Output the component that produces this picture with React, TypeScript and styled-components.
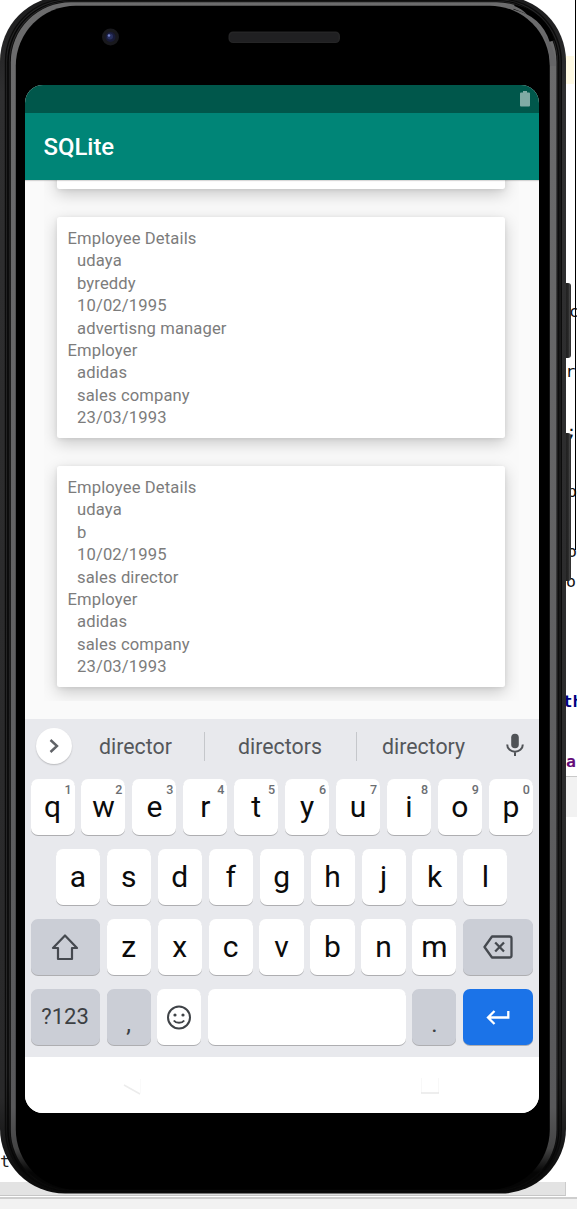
import React from 'react';
import styled, { createGlobalStyle } from 'styled-components';

const GlobalStyle = createGlobalStyle`
  * { box-sizing: border-box; }
  html, body { margin: 0; padding: 0; background: #fff; overflow: hidden; }
`;

const Stage = styled.div`
  position: relative;
  width: 577px;
  height: 1209px;
  overflow: hidden;
  background: #fff;
  font-family: Roboto, 'Liberation Sans', sans-serif;
`;

/* Editor window visible around the device */
const Editor = styled.div`
  position: absolute;
  inset: 0;
  display: flex;
  flex-direction: column;
`;
const Code = styled.div`
  height: 776px;
  padding-top: 56px;
  overflow: hidden;
`;
const ActiveLine = styled.div`
  height: 28px;
  margin: 0 3px 213px 0;
  background: #fffae3;
`;
const CodeLine = styled.div<{ $x: number; $color?: string; $bold?: boolean }>`
  height: 30px;
  line-height: 30px;
  padding-left: ${p => p.$x}px;
  white-space: pre;
  font-family: 'DejaVu Sans Mono', monospace;
  font-size: 16.5px;
  font-weight: ${p => (p.$bold ? 700 : 400)};
  color: ${p => p.$color || '#111'};
`;
const PaneHeader = styled.div`
  height: 41px;
  border-top: 1.5px solid #c9c9c9;
  background: #f2f2f2;
`;
const Output = styled.div`
  height: 365px;
  padding-top: 330px;
  font-family: 'DejaVu Sans Mono', monospace;
  font-size: 16.5px;
  line-height: 30px;
  color: #222;
`;
const ScrollTrack = styled.div`
  width: 566px;
  height: 14px;
  background: #e3e3e3;
  border-right: 1px solid #ccc;
  border-bottom: 1px solid #c6c6c6;
`;
const StatusStrip = styled.div`
  flex: 1;
  margin-top: 1px;
  border-top: 2px solid #cecece;
  background: #f2f2f2;
`;
const MarginGuide = styled.div`
  position: absolute;
  left: 575px;
  top: 0;
  width: 1px;
  height: 550px;
  background: #000;
`;

/* Device */
const Phone = styled.div`
  position: relative;
  width: 566px;
  height: 1198px;
  margin-top: -4px;
  padding: 89px 27px 0 25px;
`;
const SideButton = styled.div<{ $top: number; $h: number }>`
  position: absolute;
  left: 564px;
  top: ${p => p.$top}px;
  width: 7px;
  height: ${p => p.$h}px;
  border-radius: 0 3px 3px 0;
  background: linear-gradient(90deg, #1d1d1d, #262626 60%, #4b4b4b 85%, #1c1c1c);
`;
const BezelArt = styled.svg`
  position: absolute;
  left: 0;
  top: 0;
`;
const Screen = styled.div`
  position: relative;
  display: flex;
  flex-direction: column;
  width: 514px;
  height: 1028px;
  border-radius: 18px;
  overflow: hidden;
  background: #fafafa;
`;
const StatusBar = styled.div`
  display: flex;
  justify-content: flex-end;
  height: 28px;
  padding: 6px 9.5px 0 0;
  background: #00574b;
`;
const AppBar = styled.div`
  display: flex;
  align-items: center;
  height: 67px;
  padding: 1px 0 0 18.5px;
  background: #008577;
  box-shadow: 0 1px 1px rgba(0, 0, 0, 0.15);
  z-index: 1;
  color: #fff;
  font-size: 23.9px;
  font-weight: 500;
`;
const Content = styled.div`
  height: 539px;
  padding: 0 20px 18px 19px;
`;
const List = styled.div`
  display: flex;
  flex-direction: column;
  justify-content: flex-end;
  gap: 28px;
  height: 521px;
  padding: 0 14px 14px 13px;
  overflow: hidden;
  background: #f9f9f9;
`;
const Card = styled.div<{ $h?: number }>`
  flex: none;
  height: ${p => p.$h || 221}px;
  padding: 11px 10.5px;
  border-radius: 2.5px;
  background: #fff;
  box-shadow: 0 5px 16px rgba(0, 0, 0, 0.2), 0 1px 4px rgba(0, 0, 0, 0.07);
  color: #7c7c7c;
  font-size: 16.6px;
  letter-spacing: 0.13px;
`;
const Detail = styled.div<{ $indent?: boolean }>`
  height: 22.4px;
  line-height: 22.4px;
  padding-left: ${p => (p.$indent ? 9.5 : 0)}px;
  white-space: pre;
`;

/* Keyboard */
const Keyboard = styled.div`
  height: 338px;
  background: #e8e9ed;
`;
const Suggestions = styled.div`
  display: flex;
  align-items: center;
  height: 60px;
  padding: 0 10px 6px 11px;
`;
const Expand = styled.div`
  flex: none;
  display: flex;
  align-items: center;
  justify-content: center;
  width: 36px;
  height: 36px;
  border-radius: 50%;
  background: #fff;
  box-shadow: 0 1px 1.5px rgba(0, 0, 0, 0.2);
`;
const Word = styled.div<{ $w: number; $line?: boolean; $end?: number }>`
  flex: none;
  width: ${p => p.$w}px;
  height: 29px;
  line-height: 29px;
  padding-right: ${p => p.$end || 0}px;
  border-right: ${p => (p.$line ? '1px solid #c5c7cb' : 'none')};
  text-align: center;
  font-size: 21.3px;
  color: #54575b;
`;
const MicSlot = styled.div`
  flex: none;
  display: flex;
  justify-content: center;
  width: 30px;
  margin-left: 8.5px;
  margin-top: -2px;
`;
const Keys = styled.div`
  display: flex;
  flex-direction: column;
  gap: 14px;
`;
const KeyRow = styled.div<{ $pad?: number }>`
  display: flex;
  gap: 6.9px;
  height: 56px;
  padding: 0 ${p => (p.$pad || 0) + 6.2}px 0 ${p => (p.$pad || 0) + 5.5}px;
`;
const Key = styled.div<{ $tone?: 'grey' | 'blue'; $w?: number; $size?: number; $low?: boolean }>`
  position: relative;
  display: flex;
  align-items: center;
  justify-content: center;
  flex: ${p => (p.$w ? `0 0 ${p.$w}px` : '1 1 0')};
  min-width: 0;
  padding-top: ${p => (p.$low ? 13 : 0)}px;
  padding-bottom: ${p => (p.$low ? 0 : 2)}px;
  border-radius: 7px;
  background: ${p => (p.$tone === 'blue' ? '#1b73e8' : p.$tone === 'grey' ? '#cbced6' : '#fff')};
  box-shadow: 0 1px 0.5px rgba(0, 0, 0, 0.25);
  color: ${p => (p.$tone === 'grey' ? '#3c4043' : '#0b0b0b')};
  font-size: ${p => p.$size || 30}px;

  svg { position: relative; top: 1px; }
`;
const Hint = styled.span`
  position: absolute;
  top: 4px;
  right: 3px;
  font-size: 12.5px;
  font-weight: 500;
  line-height: 14px;
  color: #6b6e72;
`;
const NavBar = styled.div`
  display: flex;
  justify-content: space-between;
  align-items: center;
  flex: 1;
  padding: 0 99px 0 97px;
  background: #fff;
`;

const cards = [
  ['udaya', 'byreddy', '10/02/1995', 'advertisng manager'],
  ['udaya', 'b', '10/02/1995', 'sales director'],
];

const codeLines: { t: string; x: number; c?: string; b?: boolean }[] = [
  { t: 'c', x: 569 }, { t: '', x: 0 }, { t: 'r', x: 565.5 }, { t: '', x: 0 }, { t: ';', x: 566.5 }, { t: '', x: 0 },
  { t: 'p', x: 567 }, { t: '', x: 0 }, { t: 'o', x: 567 }, { t: 'o', x: 566 }, { t: '', x: 0 }, { t: '', x: 0 }, { t: '', x: 0 },
  { t: 'th', x: 562.5, c: '#000080', b: true }, { t: '', x: 0 }, { t: 'a', x: 566, c: '#660e7a', b: true },
];

/* Nested metal rims of the device, outermost first: left, right, top, bottom, radius, fill */
const rims: [number, number, number, number, number, string][] = [
  [0, 566, -4, 1193.5, 65, 'url(#shell)'],
  [4.8, 562, -1.5, 1192.5, 63, '#0b0b0b'],
  [6.2, 560.5, -0.5, 1192, 62, 'url(#line)'],
  [7.2, 559.5, 0.2, 1191.5, 62, '#060606'],
  [8.8, 558.2, 1, 1191, 61, 'url(#line)'],
  [9.8, 557.4, 1.6, 1190.5, 61, '#0c0c0c'],
  [10.8, 556.5, 2.2, 1190, 60, 'url(#shine)'],
  [15.8, 549.8, 5.8, 1189.5, 60, '#000'],
];

const Bezel = () => (
  <BezelArt width="566" height="1198" viewBox="0 -4 566 1198" fill="none">
    <defs>
      <linearGradient id="shell" x1="0" y1="0" x2="0" y2="1">
        <stop offset="0" stopColor="#1b1b1c" />
        <stop offset="0.08" stopColor="#2f2f30" />
        <stop offset="0.92" stopColor="#29292a" />
        <stop offset="0.99" stopColor="#0a0a0a" />
      </linearGradient>
      <linearGradient id="line" x1="0" y1="0" x2="0" y2="1">
        <stop offset="0" stopColor="#242425" />
        <stop offset="0.9" stopColor="#2e2e2f" />
        <stop offset="0.98" stopColor="#080808" />
      </linearGradient>
      <linearGradient id="shine" x1="0" y1="0" x2="0" y2="1">
        <stop offset="0" stopColor="#6c6c6d" />
        <stop offset="0.93" stopColor="#58585a" />
        <stop offset="0.965" stopColor="#444" />
        <stop offset="0.985" stopColor="#050505" />
      </linearGradient>
    </defs>
    {rims.map(([l, r, t, b, radius, fill]) => (
      <rect key={l} x={l} y={t} width={r - l} height={b - t} rx={radius} fill={fill} />
    ))}
    {/* unlit part of the upper right corner */}
    <path d="M514 7C535 12 547 25 552 41" stroke="#000" strokeWidth="5" />
    <path d="M508 4.200C516 6 522 9 527 14.500C520 11 514 8.500 505 7Z" fill="#6a6a6b" />
    <path d="M543 33C550 41 555.500 52 556 66H550C549.500 53 548 44 543 33Z" fill="#656567" />

    <circle cx="110.500" cy="37" r="8.500" fill="#19191d" />
    <circle cx="110.500" cy="37" r="5" fill="#191b38" />
    <circle cx="110" cy="36.500" r="3" fill="#28305f" />
    <circle cx="109" cy="35.500" r="1.200" fill="#7884c9" />
    <rect x="228.500" y="31.500" width="111.500" height="11.500" rx="4.500" fill="#252526" />
    <rect x="230" y="33" width="108.500" height="9" rx="3.500" fill="#202022" />
  </BezelArt>
);

const Battery = () => (
  <svg width="10" height="16" viewBox="0 0 10 16">
    <path d="M3 0H7V1.500H9A1 1 0 0 1 10 2.500V14.500A1 1 0 0 1 9 15.500H1A1 1 0 0 1 0 14.500V2.500A1 1 0 0 1 1 1.500H3Z" fill="#80aba5" />
  </svg>
);
const Mic = () => (
  <svg width="18" height="24" viewBox="0 0 18 24" fill="none">
    <rect x="5.200" y="0.800" width="7.600" height="14.400" rx="3.800" fill="#505357" />
    <path d="M1.200 11.500C1.200 21 16.800 21 16.800 11.500M9 18.500V23" stroke="#505357" strokeWidth="2" />
  </svg>
);
const Shift = () => (
  <svg width="28" height="28" viewBox="0 0 28 28" fill="none" stroke="#45494f" strokeWidth="2.200" strokeLinejoin="round">
    <path d="M14 2.500L26 15H21V26H7V15H2Z" />
  </svg>
);
const Backspace = () => (
  <svg width="30" height="24" viewBox="0 0 30 24" fill="none" stroke="#45494f" strokeWidth="2.300" strokeLinejoin="round">
    <path d="M9 1.500H26.500Q28.500 1.500 28.500 3.500V20.500Q28.500 22.500 26.500 22.500H9L1.500 12Z" />
    <path d="M12.200 7.500L21 16.500M21 7.500L12.200 16.500" />
  </svg>
);
const Smile = () => (
  <svg width="26" height="26" viewBox="0 0 26 26" fill="none" stroke="#3f4347" strokeWidth="2">
    <circle cx="13" cy="13.500" r="11" />
    <path d="M7.800 16.500C10 19.500 16 19.500 18.200 16.500" />
    <circle cx="9" cy="11" r="1.600" fill="#3f4347" stroke="none" />
    <circle cx="17" cy="11" r="1.600" fill="#3f4347" stroke="none" />
  </svg>
);
const Enter = () => (
  <svg width="24" height="16" viewBox="0 0 24 16" fill="none" stroke="#fff" strokeWidth="2.300">
    <path d="M22.300 2V8.500H2.500M8.500 2L2 8.500L8.500 15" />
  </svg>
);

export default function App() {
  return (
    <Stage>
      <GlobalStyle />
      <Editor>
        <Code>
          <ActiveLine />
          {codeLines.map((l, i) => (
            <CodeLine key={i} $x={l.x} $color={l.c} $bold={l.b}>{l.t}</CodeLine>
          ))}
        </Code>
        <PaneHeader />
        <Output>t:</Output>
        <ScrollTrack />
        <StatusStrip />
        <MarginGuide />
      </Editor>
      <Phone>
        <SideButton $top={287} $h={75} />
        <SideButton $top={437} $h={148} />
        <Bezel />
        <Screen>
          <StatusBar><Battery /></StatusBar>
          <AppBar>SQLite</AppBar>
          <Content>
            <List>
              <Card $h={60} />
              {cards.map((c, i) => (
                <Card key={i}>
                  <Detail>Employee Details</Detail>
                  {c.map(t => <Detail key={t} $indent>{t}</Detail>)}
                  <Detail>Employer</Detail>
                  <Detail $indent>adidas</Detail>
                  <Detail $indent>sales company</Detail>
                  <Detail $indent>23/03/1993</Detail>
                </Card>
              ))}
            </List>
          </Content>
          <Keyboard>
            <Suggestions>
              <Expand>
                <svg width="12" height="16" viewBox="0 0 12 16" fill="none" stroke="#606367" strokeWidth="2.400">
                  <path d="M2.500 2L9 8L2.500 14" />
                </svg>
              </Expand>
              <Word $w={133} $end={5} $line>director</Word>
              <Word $w={152} $end={1} $line>directors</Word>
              <Word $w={134} $end={1}>directory</Word>
              <MicSlot><Mic /></MicSlot>
            </Suggestions>
            <Keys>
              <KeyRow>
                {'qwertyuiop'.split('').map((k, i) => (
                  <Key key={k}>{k}<Hint>{(i + 1) % 10}</Hint></Key>
                ))}
              </KeyRow>
              <KeyRow $pad={25.3}>
                {'asdfghjkl'.split('').map(k => <Key key={k}>{k}</Key>)}
              </KeyRow>
              <KeyRow>
                <Key $tone="grey" $w={69.2}><Shift /></Key>
                {'zxcvbnm'.split('').map(k => <Key key={k}>{k}</Key>)}
                <Key $tone="grey" $w={69.5}><Backspace /></Key>
              </KeyRow>
              <KeyRow>
                <Key $tone="grey" $w={69.2} $size={22}>?123</Key>
                <Key $tone="grey" $w={44} $size={24} $low>,</Key>
                <Key $w={44}><Smile /></Key>
                <Key />
                <Key $tone="grey" $w={44} $size={24} $low>.</Key>
                <Key $tone="blue" $w={69.5}><Enter /></Key>
              </KeyRow>
            </Keys>
          </Keyboard>
          <NavBar>
            <svg width="20" height="20" viewBox="0 0 20 20" fill="none">
              <path d="M2 10L18 19" stroke="#ececec" strokeWidth="1.500" />
              <path d="M18.500 4V18" stroke="#fafafa" />
            </svg>
            <svg width="20" height="20" viewBox="0 0 20 20" fill="none">
              <path d="M1.500 3V18M18.500 3V18" stroke="#f8f8f8" />
              <path d="M1 18H19" stroke="#e2e2e2" strokeWidth="1.200" />
            </svg>
          </NavBar>
        </Screen>
      </Phone>
    </Stage>
  );
}
